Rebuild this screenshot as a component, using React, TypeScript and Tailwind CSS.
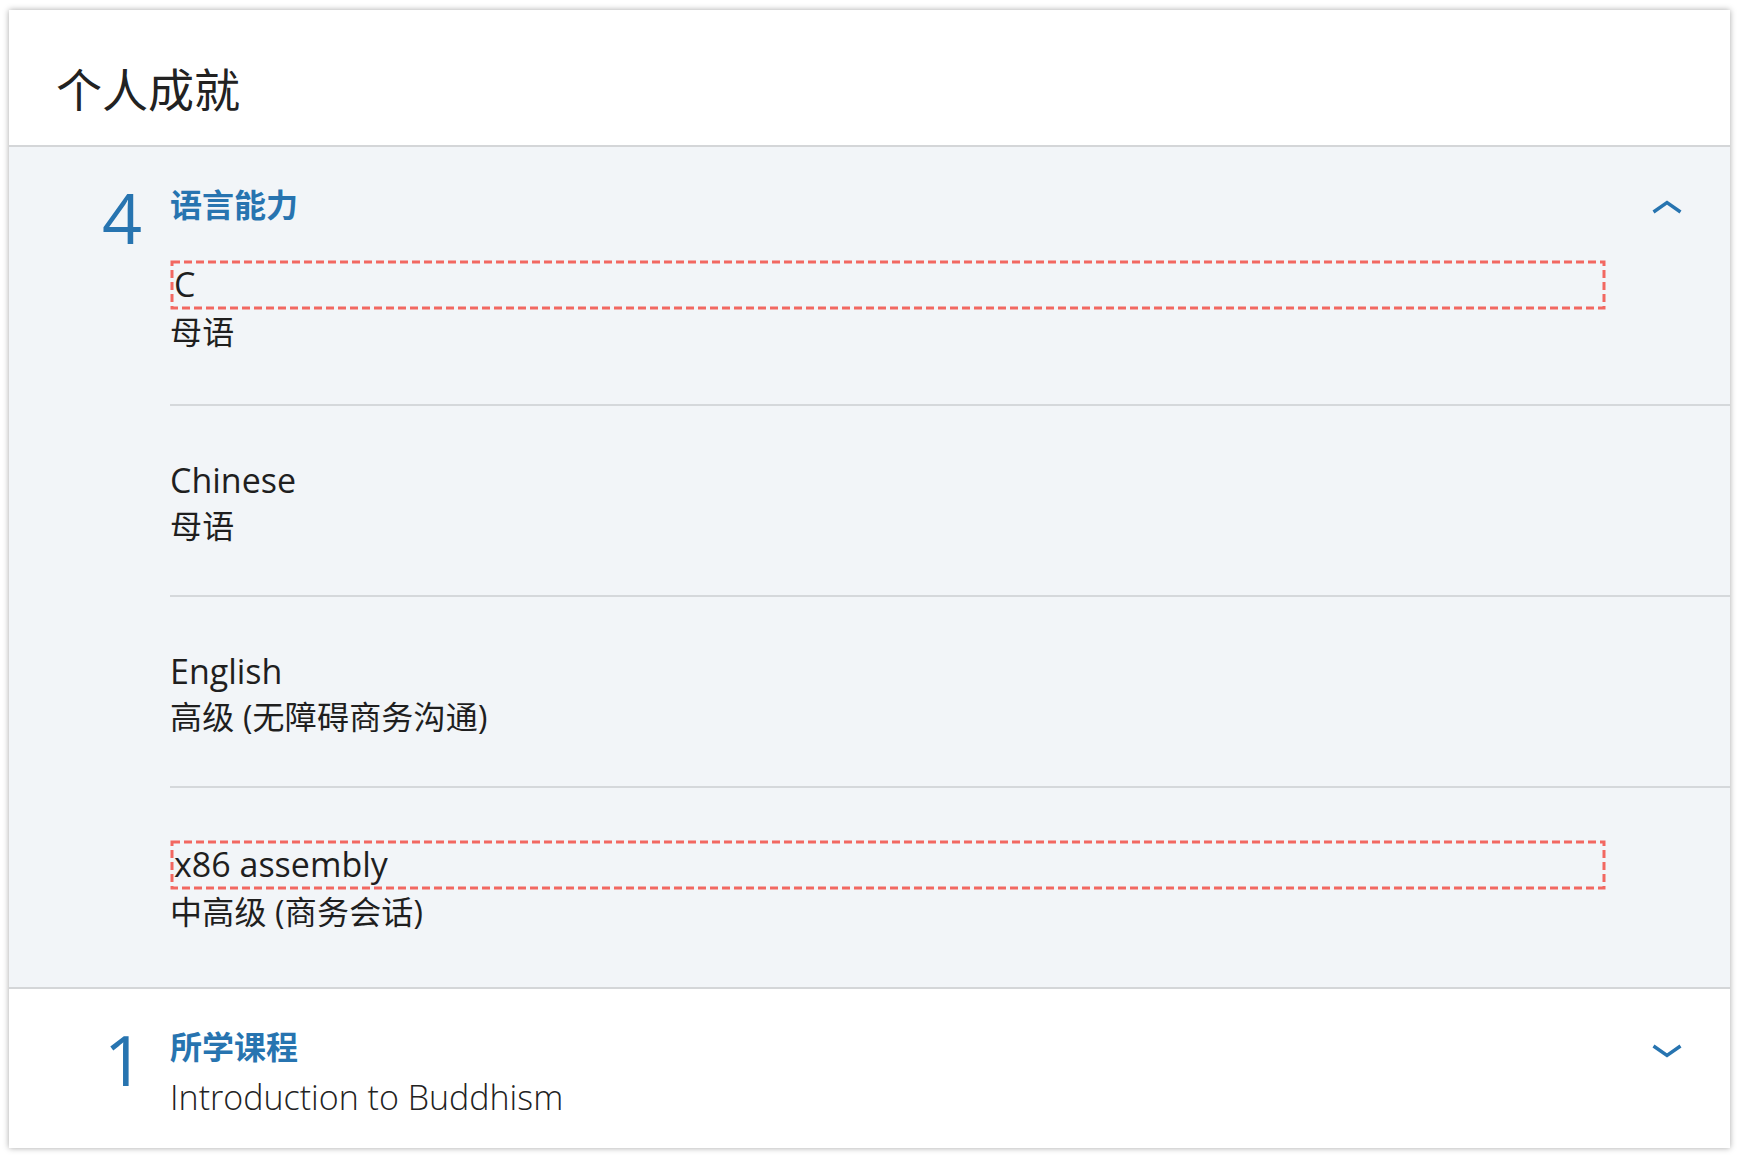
import React from 'react'

type Language = {
  name: string
  level: string
  marked?: boolean
}

const languages: Language[] = [
  { name: 'C', level: '母语', marked: true },
  { name: 'Chinese', level: '母语' },
  { name: 'English', level: '高级 (无障碍商务沟通)' },
  { name: 'x86 assembly', level: '中高级 (商务会话)', marked: true },
]

const font = { fontFamily: '"Open Sans", "Noto Sans CJK SC", sans-serif' }

function Chevron({ up }: { up?: boolean }) {
  return (
    <svg viewBox="0 0 30 14" aria-hidden="true" className="h-[14px] w-[30px]">
      <polyline
        points={up ? '1.5,12 15,2.5 28.5,12' : '1.5,2 15,11.5 28.5,2'}
        fill="none"
        stroke="#2774b0"
        strokeWidth="3.4"
      />
    </svg>
  )
}

// dashed marker drawn over the marked names
function DashedFrame() {
  return (
    <svg aria-hidden="true" className="pointer-events-none absolute inset-[1.5px] h-[calc(100%-3px)] w-[calc(100%-3px)] overflow-visible">
      <rect
        x="0"
        y="0"
        width="100%"
        height="100%"
        fill="none"
        stroke="#f26861"
        strokeWidth="3"
        strokeDasharray="8 4"
      />
    </svg>
  )
}

function LanguageRow({ item, first }: { item: Language; first: boolean }) {
  return (
    <li
      className={
        first
          ? 'pb-[50px]'
          : 'border-t-2 border-[#d5d8db] pt-[52px] pb-[47px]'
      }
    >
      {item.marked ? (
        <div className="relative mr-[125px] py-[2px] pl-[4px] text-[34px] leading-[45px] text-[#1f1f1f]">
          {item.name}
          <DashedFrame />
        </div>
      ) : (
        <div className="text-[34px] leading-[45px] text-[#1f1f1f]">{item.name}</div>
      )}
      <div className="text-[32px] leading-[45px] tracking-[0.2px] text-[#1f1f1f]">{item.level}</div>
    </li>
  )
}

export default function App() {
  return (
    <div className="min-h-screen bg-white pt-[10px] pr-[10px] pb-[10px] pl-[9px]" style={font}>
      <div className="bg-white shadow-[0_0_6px_rgba(0,0,0,0.35)]">
        <div className="h-[137px] border-b-2 border-[#d4d6d8] pt-[56px] pl-[47px]">
          <h2 className="text-[46px] leading-none font-normal text-[#222]">个人成就</h2>
        </div>

        <section className="border-b-2 border-[#d4d6d8] bg-[#f2f5f8]">
          <div className="flex pt-[35px] pb-[6px]">
            <div className="w-[161px] shrink-0 pl-[93px] text-[70px] leading-none font-[380] text-[#2774b0]">
              4
            </div>
            <div className="min-w-0 flex-1">
              <div className="flex items-start justify-between">
                <h3 className="text-[32px] leading-[45px] font-bold text-[#2774b0]">语言能力</h3>
                <div className="mt-[18px] mr-[48px]">
                  <Chevron up />
                </div>
              </div>
              <ul className="mt-[33px]">
                {languages.map((item, i) => (
                  <LanguageRow key={item.name} item={item} first={i === 0} />
                ))}
              </ul>
            </div>
          </div>
        </section>

        <section className="bg-white">
          <div className="flex pt-[35px] pb-[28px]">
            <div className="w-[161px] shrink-0 pl-[95px] text-[70px] leading-none font-[380] text-[#2774b0]">
              1
            </div>
            <div className="min-w-0 flex-1">
              <div className="flex items-start justify-between">
                <h3 className="text-[32px] leading-[45px] font-bold text-[#2774b0]">所学课程</h3>
                <div className="mt-[20px] mr-[48px]">
                  <Chevron />
                </div>
              </div>
              <div className="mt-[6px] text-[34px] leading-[45px] font-[350] text-[#222]">
                Introduction to Buddhism
              </div>
            </div>
          </div>
        </section>
      </div>
    </div>
  )
}
